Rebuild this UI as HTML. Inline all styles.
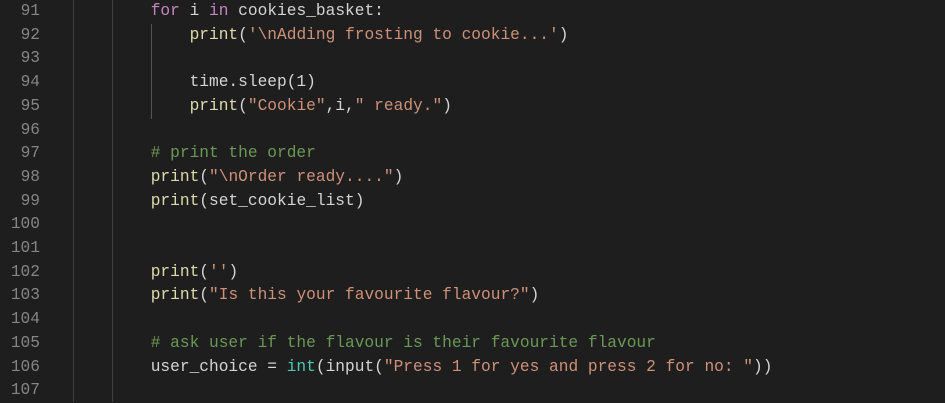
<!DOCTYPE html>
<html><head><style>
body{margin:0;background:#1e1e1e;width:945px;height:402px;overflow:hidden;font-family:"Liberation Mono",monospace;font-size:16.2px;}
.l{position:absolute;left:0;height:23.7px;line-height:23.7px;white-space:pre;width:945px}
.n{position:absolute;right:905px;color:#858585;text-align:right;width:40px}
.c{position:absolute;left:73px;color:#d4d4d4}
.g{position:absolute;width:1px;background:#404040}
.k{color:#c586c0}.f{color:#dcdcaa}.s{color:#ce9178}.m{color:#6a9955}.t{color:#4ec9b0}.num{color:#b5cea8}
</style></head><body>
<div class="g" style="left:73px;top:0;height:402px"></div>
<div class="g" style="left:112px;top:0;height:402px"></div>
<div class="g" style="left:151px;top:24px;height:95px;background:#555"></div>
<div id="w"></div>
<script>
const lines=[
['91','        <span class="k">for</span> i <span class="k">in</span> cookies_basket:'],
['92','            <span class="f">print</span>(<span class="s">\'\\nAdding frosting to cookie...\'</span>)'],
['93',''],
['94','            time.sleep(1)'],
['95','            <span class="f">print</span>(<span class="s">"Cookie"</span>,i,<span class="s">" ready."</span>)'],
['96',''],
['97','        <span class="m"># print the order</span>'],
['98','        <span class="f">print</span>(<span class="s">"\\nOrder ready...."</span>)'],
['99','        <span class="f">print</span>(set_cookie_list)'],
['100',''],['101',''],
['102','        <span class="f">print</span>(<span class="s">\'\'</span>)'],
['103','        <span class="f">print</span>(<span class="s">"Is this your favourite flavour?"</span>)'],
['104',''],
['105','        <span class="m"># ask user if the flavour is their favourite flavour</span>'],
['106','        user_choice = <span class="t">int</span>(input(<span class="s">"Press 1 for yes and press 2 for no: "</span>))'],
['107','']];
let h='';
lines.forEach((l,i)=>{h+=`<div class="l" style="top:${i*23.7}px"><span class="n">${l[0]}</span><span class="c" style="left:0">${l[1]}</span></div>`});
document.getElementById('w').innerHTML=h;
document.querySelectorAll('.c').forEach(e=>e.style.left='73px');
</script>
</body></html>
